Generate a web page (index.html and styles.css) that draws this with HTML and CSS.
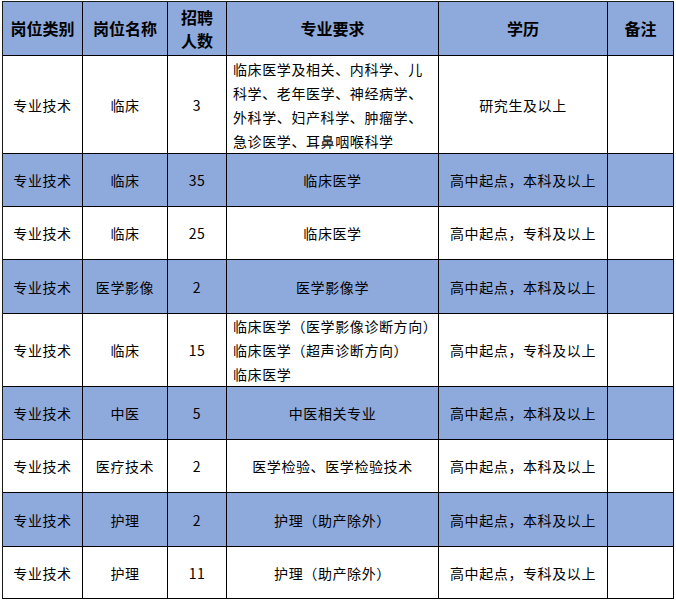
FILE: index.html
```html
<!DOCTYPE html>
<html lang="zh-CN">
<head>
<meta charset="utf-8">
<title>岗位表</title>
<link rel="stylesheet" href="styles.css">
</head>
<body>
<div class="table">
  <div class="row head">
    <div class="cell">岗位类别</div>
    <div class="cell">岗位名称</div>
    <div class="cell two">招聘<br>人数</div>
    <div class="cell">专业要求</div>
    <div class="cell">学历</div>
    <div class="cell">备注</div>
  </div>
  <div class="row r1">
    <div class="cell">专业技术</div>
    <div class="cell">临床</div>
    <div class="cell">3</div>
    <div class="cell left">临床医学及相关、内科学、儿<br>科学、老年医学、神经病学、<br>外科学、妇产科学、肿瘤学、<br>急诊医学、耳鼻咽喉科学</div>
    <div class="cell">研究生及以上</div>
    <div class="cell"></div>
  </div>
  <div class="row blue h53">
    <div class="cell">专业技术</div>
    <div class="cell">临床</div>
    <div class="cell">35</div>
    <div class="cell">临床医学</div>
    <div class="cell">高中起点，本科及以上</div>
    <div class="cell"></div>
  </div>
  <div class="row h53">
    <div class="cell">专业技术</div>
    <div class="cell">临床</div>
    <div class="cell">25</div>
    <div class="cell">临床医学</div>
    <div class="cell">高中起点，专科及以上</div>
    <div class="cell"></div>
  </div>
  <div class="row blue h54">
    <div class="cell">专业技术</div>
    <div class="cell">医学影像</div>
    <div class="cell">2</div>
    <div class="cell">医学影像学</div>
    <div class="cell">高中起点，本科及以上</div>
    <div class="cell"></div>
  </div>
  <div class="row r5">
    <div class="cell">专业技术</div>
    <div class="cell">临床</div>
    <div class="cell">15</div>
    <div class="cell left">临床医学（医学影像诊断方向）<br>临床医学（超声诊断方向）<br>临床医学</div>
    <div class="cell">高中起点，专科及以上</div>
    <div class="cell"></div>
  </div>
  <div class="row blue h53">
    <div class="cell">专业技术</div>
    <div class="cell">中医</div>
    <div class="cell">5</div>
    <div class="cell">中医相关专业</div>
    <div class="cell">高中起点，本科及以上</div>
    <div class="cell"></div>
  </div>
  <div class="row h53">
    <div class="cell">专业技术</div>
    <div class="cell">医疗技术</div>
    <div class="cell">2</div>
    <div class="cell">医学检验、医学检验技术</div>
    <div class="cell">高中起点，本科及以上</div>
    <div class="cell"></div>
  </div>
  <div class="row blue h54">
    <div class="cell">专业技术</div>
    <div class="cell">护理</div>
    <div class="cell">2</div>
    <div class="cell">护理（助产除外）</div>
    <div class="cell">高中起点，本科及以上</div>
    <div class="cell"></div>
  </div>
  <div class="row h52">
    <div class="cell">专业技术</div>
    <div class="cell">护理</div>
    <div class="cell">11</div>
    <div class="cell">护理（助产除外）</div>
    <div class="cell">高中起点，专科及以上</div>
    <div class="cell"></div>
  </div>
</div>
</body>
</html>
```

FILE: styles.css
```css
html, body {
  margin: 0;
  padding: 0;
  background: #ffffff;
}

body {
  font-family: "Noto Sans CJK SC", "Noto Sans", sans-serif;
  color: #000000;
}

.table {
  margin: 1px 0 0 2px;
  width: 672px;
  border-top: 1px solid #1a1a1a;
  border-left: 1px solid #1a1a1a;
  box-sizing: border-box;
  display: flex;
  flex-direction: column;
}

.row {
  display: grid;
  grid-template-columns: 80px 85px 59px 212px 169px 66px;
  background: #ffffff;
}

.row.blue,
.row.head {
  background: #8ea9db;
}

.cell {
  border-right: 1px solid #000000;
  border-bottom: 1px solid #000000;
  display: flex;
  align-items: center;
  justify-content: center;
  text-align: center;
  font-size: 14px;
  font-weight: 400;
  letter-spacing: 0.6px;
  line-height: 24px;
  white-space: nowrap;
  box-sizing: border-box;
}

.cell.left {
  justify-content: flex-start;
  text-align: left;
  padding-left: 6px;
}

.head {
  height: 54px;
}

.head .cell {
  font-size: 16px;
  font-weight: 700;
  letter-spacing: 0;
  line-height: 23px;
}

.r1 { height: 98px; }
.r5 { height: 73px; }
.h52 { height: 52px; }
.h53 { height: 53px; }
.h54 { height: 54px; }
```
